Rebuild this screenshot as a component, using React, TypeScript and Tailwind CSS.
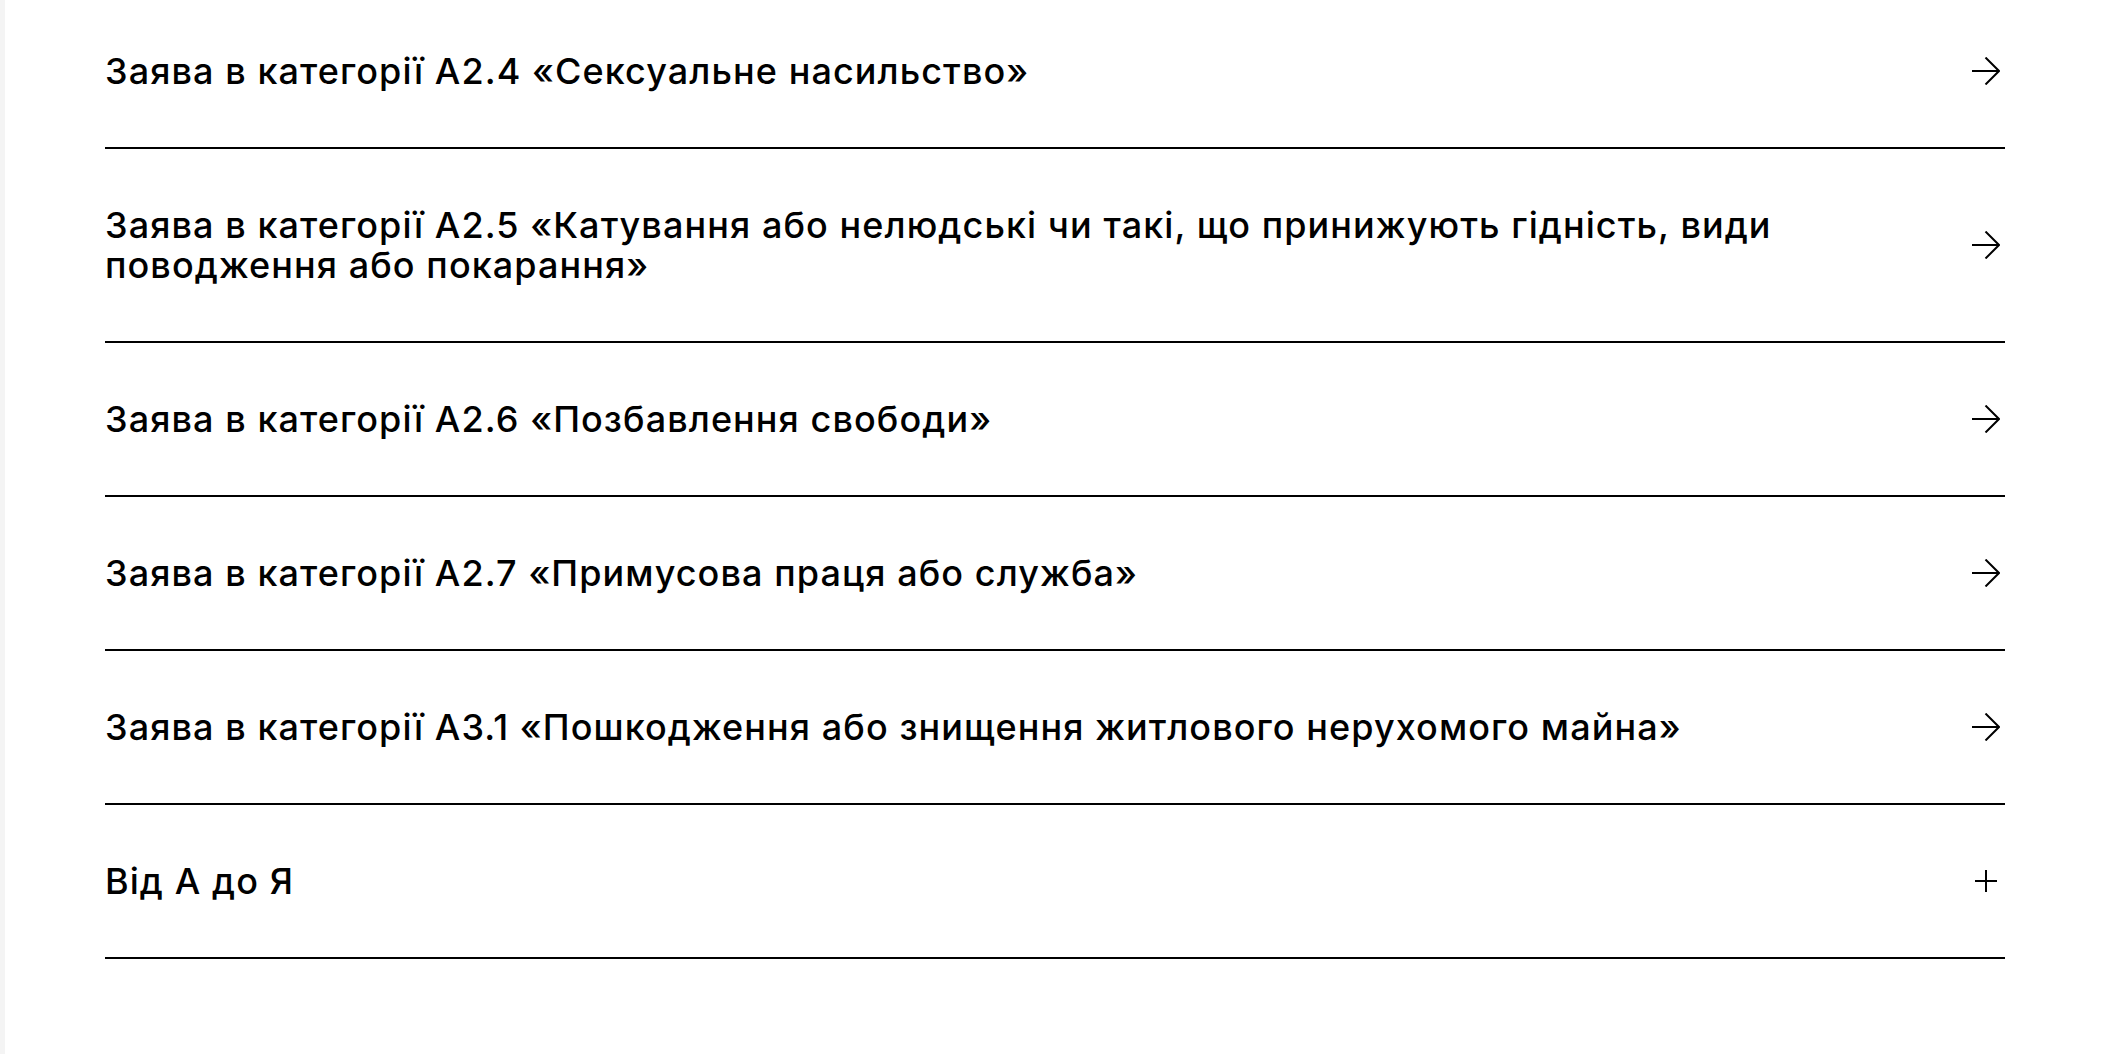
import React from "react";

const items = [
  "Заява в категорії А2.4 «Сексуальне насильство»",
  "Заява в категорії А2.5 «Катування або нелюдські чи такі, що принижують гідність, види поводження або покарання»",
  "Заява в категорії А2.6 «Позбавлення свободи»",
  "Заява в категорії А2.7 «Примусова праця або служба»",
  "Заява в категорії А3.1 «Пошкодження або знищення житлового нерухомого майна»",
];

function Arrow() {
  return (
    <svg width="28" height="28" viewBox="0 0 28 28" fill="none" stroke="black" strokeWidth="2" className="shrink-0">
      <path d="M0 14H27" />
      <path d="M13.5 0.5L27 14L13.5 27.5" />
    </svg>
  );
}

function Plus() {
  return (
    <svg width="22" height="22" viewBox="0 0 22 22" fill="none" stroke="black" strokeWidth="2" className="shrink-0">
      <path d="M0 11H22" />
      <path d="M11 0V22" />
    </svg>
  );
}

export default function App() {
  return (
    <div className="flex min-h-screen w-full bg-white" style={{ fontFamily: "Inter, 'Noto Sans', sans-serif" }}>
      <div className="w-[5px] shrink-0 bg-[#f4f4f4]" />
      <div className="w-[1900px] pl-[100px] box-content">
        {items.map((t, i) => (
          <div
            key={i}
            className={`flex items-center justify-between border-b-2 border-black ${i === 0 ? "pt-[51px] pb-[56px]" : "py-[56px]"}`}
          >
            <span className="max-w-[1800px] text-[36px] leading-[40px] tracking-[0.03em] font-medium text-black">{t}</span>
            <div className="flex w-[28px] items-center justify-center mr-[5px]">
              <Arrow />
            </div>
          </div>
        ))}
        <div className="flex items-center justify-between border-b-2 border-black py-[56px]">
          <span className="text-[36px] leading-[40px] tracking-[0.03em] font-medium text-black">Від А до Я</span>
          <div className="flex w-[28px] items-center justify-end mr-[8px]">
            <Plus />
          </div>
        </div>
      </div>
    </div>
  );
}
